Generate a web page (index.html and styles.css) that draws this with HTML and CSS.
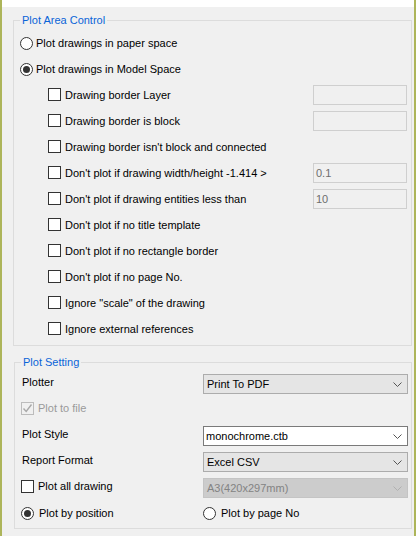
FILE: index.html
```html
<!DOCTYPE html>
<html>
<head>
    <title>Plot Options</title>
    <link rel="stylesheet" href="styles.css">
</head>
<body>
    <div class="window">
        <div class="strip"></div>

        <fieldset class="group area">
            <legend>Plot Area Control</legend>
            <div class="row"><span class="radio"></span><span>Plot drawings in paper space</span></div>
            <div class="row"><span class="radio checked"></span><span>Plot drawings in Model Space</span></div>
            <div class="row sub"><span class="check"></span><span>Drawing border Layer</span><span class="field"></span></div>
            <div class="row sub"><span class="check"></span><span>Drawing border is block</span><span class="field"></span></div>
            <div class="row sub"><span class="check"></span><span>Drawing border isn't block and connected</span></div>
            <div class="row sub"><span class="check"></span><span>Don't plot if drawing width/height -1.414 &gt;</span><span class="field">0.1</span></div>
            <div class="row sub"><span class="check"></span><span>Don't plot if drawing entities less than</span><span class="field">10</span></div>
            <div class="row sub"><span class="check"></span><span>Don't plot if no title template</span></div>
            <div class="row sub"><span class="check"></span><span>Don't plot if no rectangle border</span></div>
            <div class="row sub"><span class="check"></span><span>Don't plot if no page No.</span></div>
            <div class="row sub"><span class="check"></span><span>Ignore "scale" of the drawing</span></div>
            <div class="row sub"><span class="check"></span><span>Ignore external references</span></div>
        </fieldset>

        <fieldset class="group setting">
            <legend>Plot Setting</legend>
            <div class="grid">
                <span class="caption">Plotter</span>
                <span class="select">Print To PDF<svg class="chevron" width="9" height="5" viewBox="0 0 9 5"><polyline points="0.5,0.5 4.5,4.5 8.5,0.5"/></svg></span>

                <span class="caption"><span class="check disabled"><svg width="11" height="11" viewBox="0 0 11 11"><polyline points="1.5,5.5 4.2,8.5 9.5,1.5"/></svg></span><span class="muted">Plot to file</span></span>
                <span></span>

                <span class="caption">Plot Style</span>
                <span class="select combo">monochrome.ctb<svg class="chevron" width="9" height="5" viewBox="0 0 9 5"><polyline points="0.5,0.5 4.5,4.5 8.5,0.5"/></svg></span>

                <span class="caption">Report Format</span>
                <span class="select">Excel CSV<svg class="chevron" width="9" height="5" viewBox="0 0 9 5"><polyline points="0.5,0.5 4.5,4.5 8.5,0.5"/></svg></span>

                <span class="caption"><span class="check"></span><span>Plot all drawing</span></span>
                <span class="select off">A3(420x297mm)<svg class="chevron" width="9" height="5" viewBox="0 0 9 5"><polyline points="0.5,0.5 4.5,4.5 8.5,0.5"/></svg></span>

                <span class="caption last"><span class="radio checked"></span><span>Plot by position</span></span>
                <span class="caption last"><span class="radio"></span><span>Plot by page No</span></span>
            </div>
        </fieldset>
    </div>
</body>
</html>
```

FILE: styles.css
```css
* {
    box-sizing: border-box;
}

body {
    margin: 0;
    background-color: #f0f0f0;
    font-family: "Liberation Sans", Arial, sans-serif;
    font-size: 11px;
    color: #000;
}

.window {
    width: 416px;
    height: 536px;
    overflow: hidden;
    background-color: #f0f0f0;
    border-left: 2px solid #adb55a;
    border-right: 2px solid #adb55a;
}

.strip {
    height: 7px;
    background-color: #fff;
}

/* group boxes */
.group {
    margin: 6px 2px 0 11px;
    padding: 3px 4px 3px 6px;
    border: 1px solid #dcdcdc;
    min-width: 0;
}

.group legend {
    padding: 0 2px;
    line-height: 14px;
    color: #0a64d8;
}

.setting {
    margin: 9px 2px 0 12px;
    padding: 0 3px 3px 6px;
}

/* plot area rows */
.row {
    display: flex;
    align-items: center;
    height: 26px;
    gap: 3px;
}

.row.sub {
    padding-left: 28px;
    gap: 4px;
}

.field {
    margin-left: auto;
    width: 94px;
    height: 20px;
    padding: 0 2px;
    line-height: 18px;
    border: 1px solid #cfcfcf;
    background-color: #f0f0f0;
    color: #6d6d6d;
}

/* check boxes and radio buttons */
.check,
.radio {
    flex: none;
    width: 13px;
    height: 13px;
    border: 1px solid #333;
    background-color: #fff;
}

.row .check {
    margin-bottom: 2px;
}

.radio {
    border-radius: 50%;
    display: flex;
    align-items: center;
    justify-content: center;
}

.radio.checked::after {
    content: "";
    width: 7px;
    height: 7px;
    border-radius: 50%;
    background-color: #333;
}

.check.disabled {
    border-color: #bcbcbc;
    background-color: #f0f0f0;
    display: flex;
    align-items: center;
    justify-content: center;
}

.check.disabled polyline {
    fill: none;
    stroke: #a8a8a8;
    stroke-width: 1.4;
}

.muted {
    color: #9a9a9a;
}

/* plot setting grid */
.grid {
    display: grid;
    grid-template-columns: 182px 205px;
    grid-auto-rows: 26px;
}

.caption {
    display: flex;
    align-items: center;
    gap: 4px;
    padding-left: 1px;
}

.caption .check,
.caption .radio {
    margin-left: -1px;
}

.caption.last {
    height: 28px;
    gap: 5px;
}

.select {
    align-self: end;
    margin-bottom: 1px;
    height: 20px;
    display: flex;
    align-items: center;
    padding: 0 5px 0 3px;
    border: 1px solid #acacac;
    background-color: #e5e5e5;
}

.select.combo {
    border-color: #7a7a7a;
    background-color: #fff;
    padding-left: 2px;
}

.select.off {
    border-color: #c4c4c4;
    background-color: #cccccc;
    color: #838383;
}

.chevron {
    margin-left: auto;
}

.chevron polyline {
    fill: none;
    stroke: #555;
    stroke-width: 1;
}

.select.off .chevron polyline {
    stroke: #b0b0b0;
}
```
